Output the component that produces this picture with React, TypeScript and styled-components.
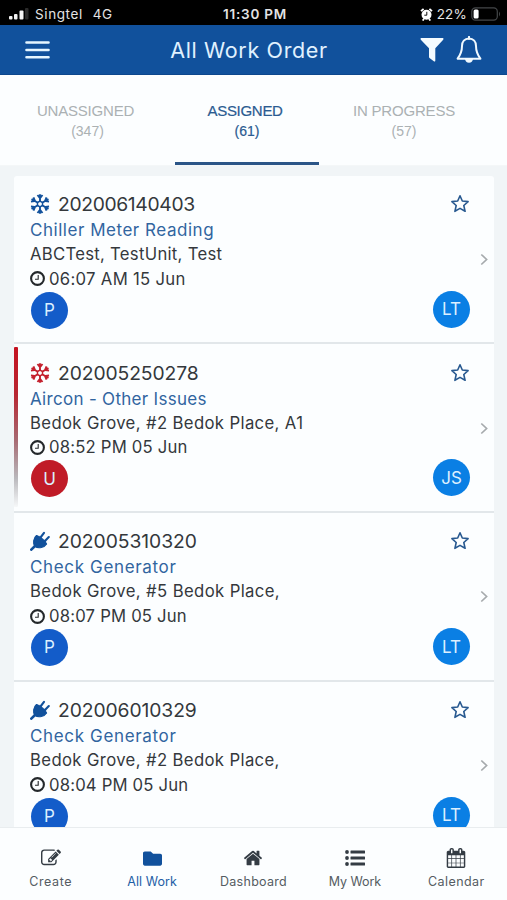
import React from "react";
import styled, { createGlobalStyle } from "styled-components";
import { FaFolder } from "react-icons/fa";

const NAVY = "#11519c";

const GlobalStyle = createGlobalStyle`
  * { box-sizing: border-box; }
  body { margin: 0; background: #f1f5f7; }
`;

const Screen = styled.div`
  width: 507px;
  height: 900px;
  display: flex;
  flex-direction: column;
  overflow: hidden;
  background: #f1f5f7;
  color: #34383c;
  font-family: Inter, "Liberation Sans", sans-serif;
`;

const Label = styled.span<{ $ls?: number }>`
  letter-spacing: ${(p) => p.$ls ?? 0}px;
  white-space: pre;
`;

const StatusBar = styled.div`
  height: 25px;
  flex: none;
  display: grid;
  grid-template-columns: 1fr auto 1fr;
  align-items: center;
  padding: 3px 6px 0 9px;
  background: #000;
  color: #e4e4e4;
  font-size: 13.5px;
  line-height: 20px;
`;

const StatusGroup = styled.div<{ $end?: boolean }>`
  display: flex;
  align-items: center;
  justify-content: ${(p) => (p.$end ? "flex-end" : "flex-start")};
  gap: ${(p) => (p.$end ? 4 : 6)}px;
`;

const Clock = styled.span`
  font-weight: 600;
  letter-spacing: 0.75px;
`;

const Network = styled.span`
  margin-left: 4px;
  letter-spacing: 0.4px;
`;

const Header = styled.header`
  height: 50px;
  flex: none;
  display: grid;
  grid-template-columns: 1fr auto 1fr;
  align-items: center;
  padding: 0 25px;
  background: ${NAVY};
  border-bottom: 1px solid #0d478d;
  color: #e0f1ff;
`;

const HeaderTitle = styled.h1`
  margin: 0 0 0 -9px;
  font-size: 21.5px;
  font-weight: 400;
  line-height: 28px;
  letter-spacing: 0.65px;
`;

const HeaderActions = styled.div`
  display: flex;
  justify-content: flex-end;
  align-items: center;
  gap: 12px;
`;

const Tabs = styled.nav`
  height: 91px;
  flex: none;
  display: flex;
  background: #fcfeff;
  border-bottom: 1px solid #f4f7f8;
`;

const Tab = styled.div<{ $active?: boolean; $width: number }>`
  width: ${(p) => p.$width}px;
  height: 90px;
  padding-top: 25px;
  text-align: center;
  font-family: "Liberation Sans", Arial, sans-serif;
  font-size: 15px;
  line-height: 21px;
  color: ${(p) => (p.$active ? "#2b5b91" : "#abb1b3")};
  -webkit-text-stroke: ${(p) => (p.$active ? "0.2px" : "0")};
  border-bottom: 3px solid ${(p) => (p.$active ? "#2b5587" : "transparent")};
`;

const Count = styled.div`
  font-size: 14px;
`;

const List = styled.main`
  flex: 1;
  min-height: 0;
  overflow: hidden;
  padding: 9.5px 13px 0 14px;
`;

const Card = styled.article<{ $first?: boolean }>`
  position: relative;
  height: 168.7px;
  display: grid;
  grid-template-columns: 1fr 38px 24px;
  padding: 14.5px 0 0 16px;
  background: #fcfeff;
  border-bottom: 2px solid #e2e7ea;
  border-radius: ${(p) => (p.$first ? "3px 3px 0 0" : "0")};
`;

const UrgentStripe = styled.div`
  position: absolute;
  left: 0;
  top: 3px;
  width: 4px;
  height: 160px;
  border-radius: 1px;
  background: linear-gradient(#c51220 0%, #b82732 30%, #a76a72 58%, #b9b8bc 82%, #f6f8f9 100%);
`;

const Details = styled.div`
  display: flex;
  flex-direction: column;
  white-space: nowrap;
`;

const OrderNumber = styled.div`
  height: 28px;
  display: flex;
  align-items: center;
  gap: 8px;
  font-size: 19.3px;
  line-height: 28px;
`;

const OrderTitle = styled.div`
  height: 24px;
  font-size: 17px;
  line-height: 24px;
  color: #31659f;
`;

const Line = styled.div`
  height: 24.5px;
  display: flex;
  align-items: center;
  gap: 4px;
  font-size: 16.7px;
  line-height: 24.5px;
`;

const Avatar = styled.div<{ $color: string; $right?: boolean }>`
  width: 37px;
  height: 37px;
  margin: ${(p) => (p.$right ? "0" : "0.5px 0 0 1px")};
  border-radius: 50%;
  display: flex;
  align-items: center;
  justify-content: center;
  background: ${(p) => p.$color};
  color: #dcefff;
  font-size: 17px;
`;

const Side = styled.div`
  display: flex;
  flex-direction: column;
  justify-content: space-between;
  padding: 4px 0 14.5px;
  align-items: flex-end;
`;

const StarSlot = styled.div`
  display: flex;
`;

const Arrow = styled.div`
  display: flex;
  justify-content: flex-end;
  padding: 63px 6px 0 0;
`;

const BottomNav = styled.nav`
  height: 73px;
  flex: none;
  display: grid;
  grid-template-columns: repeat(5, 1fr);
  border-top: 1px solid #e9edef;
  background: #fcfeff;
`;

const NavItem = styled.div<{ $active?: boolean }>`
  display: flex;
  flex-direction: column;
  align-items: center;
  padding-top: 19px;
  font-size: 12.5px;
  line-height: 16px;
  color: ${(p) => (p.$active ? "#1f5ea6" : "#555c62")};
`;

const NavIcon = styled.div<{ $active?: boolean }>`
  height: 22px;
  margin-bottom: 5px;
  display: flex;
  align-items: center;
  color: ${(p) => (p.$active ? NAVY : "#343c44")};
`;

const EDIT =
  "M888 1184l116-116-152-152-116 116v56h96v96h56zm440-720q-16-16-33 1l-350 350q-17 17-1 33t33-1l350-350q17-17 1-33zm80 594v190q0 119-84.5 203.5t-203.5 84.5h-832q-119 0-203.5-84.5t-84.5-203.5v-832q0-119 84.5-203.5t203.5-84.5h832q63 0 117 25 15 7 18 23 3 17-9 29l-49 49q-14 14-32 8-23-6-45-6h-832q-66 0-113 47t-47 113v832q0 66 47 113t113 47h832q66 0 113-47t47-113v-126q0-13 9-22l64-64q15-15 35-7t20 29zm-96-738l288 288-672 672h-288v-288zm444 132l-92 92-288-288 92-92q28-28 68-28t68 28l152 152q28 28 28 68t-28 68z";
const HOME =
  "M1472 992v480q0 26-19 45t-45 19h-384v-384h-256v384h-384q-26 0-45-19t-19-45v-480q0-1 .5-3t.5-3l575-474 575 474q1 2 1 6zm223-69l-62 74q-8 9-21 11h-3q-13 0-21-7l-692-577-692 577q-12 8-24 7-13-2-21-11l-62-74q-8-10-7-23.5t11-21.5l719-599q32-26 76-26t76 26l244 204v-195q0-14 9-23t23-9h192q14 0 23 9t9 23v408l219 182q10 8 11 21.5t-7 23.5z";
const CALENDAR =
  "M192 1664h288v-288h-288v288zm352 0h320v-288h-320v288zm-352-352h288v-320h-288v320zm352 0h320v-320h-320v320zm-352-384h288v-288h-288v288zm736 736h320v-288h-320v288zm-384-736h320v-288h-320v288zm768 736h288v-288h-288v288zm-384-352h320v-320h-320v320zm-352-864v-288q0-13-9.5-22.5t-22.5-9.5h-64q-13 0-22.5 9.5t-9.5 22.5v288q0 13 9.5 22.5t22.5 9.5h64q13 0 22.5-9.5t9.5-22.5zm736 864h288v-320h-288v320zm-384-384h320v-288h-320v288zm384 0h288v-288h-288v288zm32-480v-288q0-13-9.5-22.5t-22.5-9.5h-64q-13 0-22.5 9.5t-9.5 22.5v288q0 13 9.5 22.5t22.5 9.5h64q13 0 22.5-9.5t9.5-22.5zm384-64v1280q0 52-38 90t-90 38h-1408q-52 0-90-38t-38-90v-1280q0-52 38-90t90-38h128v-96q0-66 47-113t113-47h64q66 0 113 47t47 113v96h384v-96q0-66 47-113t113-47h64q66 0 113 47t47 113v96h128q52 0 90 38t38 90z";

const Glyph = ({ d, size }: { d: string; size: number }) => (
  <svg width={size} height={size} viewBox="0 0 1792 1792" fill="currentColor">
    <path d={d} />
  </svg>
);

const TimeIcon = () => (
  <svg width="15" height="15" viewBox="0 0 15 15" fill="none" stroke="#24282b">
    <circle cx="7.5" cy="7.5" r="6.400" strokeWidth="2.100" />
    <path d="M8.200 4V8.200H5" strokeWidth="1.100" />
  </svg>
);

const Snowflake = ({ color }: { color: string }) => (
  <svg width="20" height="20" viewBox="-10 -10 20 20" fill="none" stroke={color} strokeWidth="1.9">
    <path d="M0-2.900L2.500-1.450V1.450L0 2.900L-2.500 1.450V-1.450Z" strokeWidth="1.500" />
    {[0, 60, 120, 180, 240, 300].map((a) => (
      <path key={a} transform={`rotate(${a})`} d="M0-2.900V-9.800M-2.500-9L0-5.800L2.500-9" />
    ))}
  </svg>
);

const Plug = () => (
  <svg width="20" height="20" viewBox="0 0 20 20" fill={NAVY} stroke={NAVY} strokeLinecap="round">
    <path d="M1.300 18.700L6 14" strokeWidth="2.600" />
    <path d="M10.500 6.500L14 1.800M14.500 10.500L18.800 6" strokeWidth="2.100" />
    <path d="M6.500 4.500L16.500 13C14.500 16.500 8.500 18 5 15.500C2.500 12.500 3.500 7 6.500 4.500Z" strokeWidth="1.200" strokeLinejoin="round" />
    <path d="M6.500 4.500L10 5.500L15.500 10L16.500 13Z" strokeWidth="0.500" />
  </svg>
);

const Signal = () => (
  <svg width="20" height="12" viewBox="0 0 20 12" fill="#f4f4f4">
    <rect x="0" y="8" width="3.5" height="3.5" rx="1" />
    <rect x="5" y="6" width="3.5" height="5.5" rx="1" />
    <rect x="10.5" y="2.5" width="4" height="9" rx="1" />
    <rect x="16" y="0" width="3.5" height="11.5" rx="1" fill="#2a2a2a" />
  </svg>
);

const Alarm = () => (
  <svg width="13" height="13" viewBox="0 0 13 13">
    <path d="M1 3.2L3.6.8M12 3.2L9.4.8M2.6 12.5L4 11M10.4 12.5L9 11" stroke="#fff" strokeWidth="1.8" />
    <circle cx="6.5" cy="6.8" r="5" fill="#fff" />
    <path d="M6.8 3.8V7.2H4.3" fill="none" stroke="#111" strokeWidth="1" />
  </svg>
);

const Battery = () => (
  <svg width="30" height="14" viewBox="0 0 30 14">
    <rect x="0.8" y="0.8" width="25.5" height="12.4" rx="3.6" fill="none" stroke="#444749" strokeWidth="1.2" />
    <rect x="2.6" y="2.6" width="5" height="8.8" rx="1.5" fill="#fff" />
    <path d="M28 4.5Q30 7 28 9.5Z" fill="#444749" />
  </svg>
);

const Menu = () => (
  <svg width="25" height="20" viewBox="0 0 25 20" stroke="#e6f6ff" strokeWidth="2.6" strokeLinecap="round">
    <path d="M1.5 2.5H23.5M1.5 10H23.5M1.5 17.3H23.5" />
  </svg>
);

const Funnel = () => (
  <svg width="24" height="24" viewBox="0 0 24 24" fill="#f4fbff">
    <path d="M1 0H23Q24 .8 23.2 1.8L15.3 10.3V22.7Q15 24 13.8 23.3L9.5 20Q9 19.5 9 19V10.3L.8 1.8Q0 .8 1 0Z" />
  </svg>
);

const Bell = () => (
  <svg width="26" height="28" viewBox="0 0 26 28" fill="none" stroke="#f0f9ff" strokeWidth="2" strokeLinejoin="round">
    <path d="M13 2.500C8.500 2.500 6 6 6 10C6 16.500 4 19.500 1.600 22.700H24.400C22 19.500 20 16.500 20 10C20 6 17.500 2.500 13 2.500Z" />
    <path d="M13 .8V3" strokeLinecap="round" />
    <path d="M9 23H17Q16.500 26.700 13 26.700Q9.500 26.700 9 23Z" fill="#f0f9ff" stroke="none" />
  </svg>
);

const Star = () => (
  <svg width="20" height="20" viewBox="0 0 20 20" fill="none" stroke="#285990" strokeWidth="1.6" strokeLinejoin="round">
    <path d="M10 1.800L12.300 7L18.100 7.600L13.800 11.500L15.100 17.300L10 14.400L4.900 17.300L6.200 11.500L1.900 7.600L7.700 7Z" />
  </svg>
);

const Chevron = () => (
  <svg width="8" height="13" viewBox="0 0 8 13" fill="none" stroke="#a6aaad" strokeWidth="1.7">
    <path d="M1.300 1.500L6.600 6.500L1.300 11.500" />
  </svg>
);

const Bullets = () => (
  <svg width="20" height="16" viewBox="0 0 20 16" fill="currentColor">
    {[2, 8, 14].map((y) => (
      <g key={y}>
        <circle cx="2" cy={y} r="1.9" />
        <rect x="5.500" y={y - 1.4} width="14.500" height="2.800" rx="0.500" />
      </g>
    ))}
  </svg>
);

type Fitted = [text: string, spacing: number];

interface Order {
  kind: "cooling" | "power";
  urgent?: boolean;
  number: Fitted;
  title: Fitted;
  place: Fitted;
  time: Fitted;
  status: string;
  assignee: string;
}

const orders: Order[] = [
  { kind: "cooling", number: ["202006140403", -0.35], title: ["Chiller Meter Reading", 0.53], place: ["ABCTest, TestUnit, Test", 0.28], time: ["06:07 AM 15 Jun", 0.3], status: "P", assignee: "LT" },
  { kind: "cooling", urgent: true, number: ["202005250278", -0.1], title: ["Aircon - Other Issues", 0.3], place: ["Bedok Grove, #2 Bedok Place, A1", 0.37], time: ["08:52 PM 05 Jun", 0.19], status: "U", assignee: "JS" },
  { kind: "power", number: ["202005310320", -0.05], title: ["Check Generator", 0.65], place: ["Bedok Grove, #5 Bedok Place,", 0.38], time: ["08:07 PM 05 Jun", 0.19], status: "P", assignee: "LT" },
  { kind: "power", number: ["202006010329", -0.09], title: ["Check Generator", 0.65], place: ["Bedok Grove, #2 Bedok Place,", 0.37], time: ["08:04 PM 05 Jun", 0.17], status: "P", assignee: "LT" },
];

const Fit = ({ value }: { value: Fitted }) => <Label $ls={value[1]}>{value[0]}</Label>;

const OrderCard = ({ order, first }: { order: Order; first: boolean }) => (
  <Card $first={first}>
    {order.urgent && <UrgentStripe />}
    <Details>
      <OrderNumber>
        {order.kind === "cooling" ? <Snowflake color={order.urgent ? "#c4202d" : NAVY} /> : <Plug />}
        <Fit value={order.number} />
      </OrderNumber>
      <OrderTitle>
        <Fit value={order.title} />
      </OrderTitle>
      <Line>
        <Fit value={order.place} />
      </Line>
      <Line>
        <TimeIcon />
        <Fit value={order.time} />
      </Line>
      <Avatar $color={order.urgent ? "#c01b27" : "#135cc9"}>{order.status}</Avatar>
    </Details>
    <Side>
      <StarSlot>
        <Star />
      </StarSlot>
      <Avatar $color="#0a7fe4" $right>
        {order.assignee}
      </Avatar>
    </Side>
    <Arrow>
      <Chevron />
    </Arrow>
  </Card>
);

const navItems = [
  { label: "Create", ls: 0.6, icon: <Glyph d={EDIT} size={20} /> },
  { label: "All Work", ls: 0.05, icon: <FaFolder size={19} />, active: true },
  { label: "Dashboard", ls: 0.3, icon: <Glyph d={HOME} size={20} /> },
  { label: "My Work", ls: -0.1, icon: <Bullets /> },
  { label: "Calendar", ls: 0.4, icon: <Glyph d={CALENDAR} size={20} /> },
];

export default function App() {
  return (
    <Screen>
      <GlobalStyle />
      <StatusBar>
        <StatusGroup>
          <Signal />
          <Label $ls={0.6}>Singtel</Label>
          <Network>4G</Network>
        </StatusGroup>
        <Clock>11:30 PM</Clock>
        <StatusGroup $end>
          <Alarm />
          <Label $ls={0.2}>22%</Label>
          <Battery />
        </StatusGroup>
      </StatusBar>
      <Header>
        <Menu />
        <HeaderTitle>All Work Order</HeaderTitle>
        <HeaderActions>
          <Funnel />
          <Bell />
        </HeaderActions>
      </Header>
      <Tabs>
        <Tab $width={175}>
          <Label $ls={-0.2}>{"UNASSIGNED "}</Label>
          <Count>(347)</Count>
        </Tab>
        <Tab $width={144} $active>
          <Label $ls={-0.3}>{"ASSIGNED "}</Label>
          <Count>(61)</Count>
        </Tab>
        <Tab $width={170}>
          <Label $ls={-0.2}>{"IN PROGRESS"}</Label>
          <Count>(57)</Count>
        </Tab>
      </Tabs>
      <List>
        {orders.map((order, i) => (
          <OrderCard key={order.number[0]} order={order} first={i === 0} />
        ))}
      </List>
      <BottomNav>
        {navItems.map((item) => (
          <NavItem key={item.label} $active={item.active}>
            <NavIcon $active={item.active}>{item.icon}</NavIcon>
            <Label $ls={item.ls}>{item.label}</Label>
          </NavItem>
        ))}
      </BottomNav>
    </Screen>
  );
}
